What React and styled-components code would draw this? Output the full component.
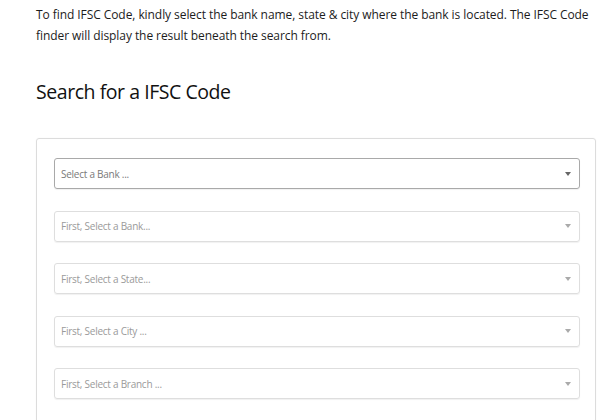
import React from "react";
import styled, { createGlobalStyle } from "styled-components";

const GlobalStyle = createGlobalStyle`
  html, body {
    margin: 0;
    padding: 0;
    background: #fff;
  }
  body {
    font-family: "Open Sans", "Noto Sans", sans-serif;
    color: #222;
  }
`;

const Page = styled.div`
  width: 600px;
  height: 420px;
  overflow: hidden;
  padding: 4px 4px 0 36px;
  box-sizing: border-box;
`;

const Intro = styled.p`
  margin: 0;
  font-size: 12px;
  line-height: 21px;
  color: #1c1c1c;
  letter-spacing: -0.07px;
`;

const Heading = styled.h2`
  margin: 32px 0 0;
  font-size: 19.5px;
  font-weight: 400;
  line-height: 28px;
  color: #111;
  letter-spacing: -0.45px;
`;

const Card = styled.div`
  margin-top: 32px;
  border: 1px solid #dcdcdc;
  border-radius: 3px;
  padding: 19px 15px 40px 17px;
  display: flex;
  flex-direction: column;
  gap: 21.5px;
  box-shadow: 0 0 2px rgba(0, 0, 0, 0.04);
`;

const Select = styled.div`
  height: 31px;
  box-sizing: border-box;
  border: 1px solid ${(p) => (p.$active ? "#a9a9a9" : "#dedede")};
  border-radius: 3px;
  box-shadow: 0 1px 1px rgba(0, 0, 0, 0.06);
  display: flex;
  align-items: center;
  justify-content: space-between;
  padding: 0 8px 0 6px;
  font-size: 10px;
  color: ${(p) => (p.$active ? "#7a7a7a" : "#9a9a9a")};
  letter-spacing: -0.25px;
`;

const Arrow = styled.span`
  width: 0;
  height: 0;
  border-left: 3px solid transparent;
  border-right: 3px solid transparent;
  border-top: 4px solid ${(p) => (p.$active ? "#666" : "#aaa")};
`;

const fields = [
  { label: "Select a Bank ...", active: true },
  { label: "First, Select a Bank..." },
  { label: "First, Select a State..." },
  { label: "First, Select a City ..." },
  { label: "First, Select a Branch ..." },
];

export default function App() {
  return (
    <>
      <GlobalStyle />
      <Page>
        <Intro>
          To find IFSC Code, kindly select the bank name, state &amp; city where the bank is located. The IFSC Code
          finder will display the result beneath the search from.
        </Intro>
        <Heading>Search for a IFSC Code</Heading>
        <Card>
          {fields.map((f) => (
            <Select key={f.label} $active={f.active}>
              <span>{f.label}</span>
              <Arrow $active={f.active} />
            </Select>
          ))}
        </Card>
      </Page>
    </>
  );
}
